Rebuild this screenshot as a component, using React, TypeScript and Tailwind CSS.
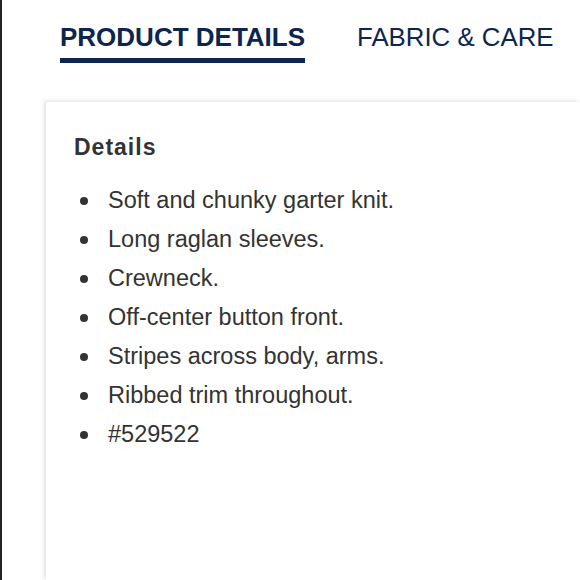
const items = [
  "Soft and chunky garter knit.",
  "Long raglan sleeves.",
  "Crewneck.",
  "Off-center button front.",
  "Stripes across body, arms.",
  "Ribbed trim throughout.",
  "#529522",
];

export default function App() {
  return (
    <div className="flex h-[580px] w-[580px] overflow-hidden bg-white font-['Liberation_Sans',Arial,sans-serif]">
      <div className="w-[2px] shrink-0 bg-[#222]" />
      <div className="flex min-w-0 flex-1 flex-col">
        <nav className="flex items-baseline gap-[52px] pl-[58px] pt-[24px] text-[#0d2650]">
          <div className="flex flex-col">
            <span className="whitespace-nowrap text-[26px] font-bold leading-none">
              PRODUCT DETAILS
            </span>
            <span className="mt-[8px] h-[5px] w-full bg-[#0d2650]" />
          </div>
          <span className="whitespace-nowrap text-[25.8px] leading-none">
            FABRIC &amp; CARE
          </span>
        </nav>
        <section className="ml-[44px] mt-[39px] flex-1 bg-white pl-[28px] pt-[34px] shadow-[-2px_-1px_4px_rgba(0,0,0,0.12)]">
          <h2 className="text-[23px] font-bold leading-none tracking-[1px] text-[#333]">
            Details
          </h2>
          <ul className="mt-[22px] text-[23.5px] leading-[39px] text-[#333]">
            {items.map((item) => (
              <li key={item} className="flex items-center whitespace-nowrap">
                <span className="ml-[6px] mr-[20px] h-[8px] w-[8px] rounded-full bg-[#333]" />
                {item}
              </li>
            ))}
          </ul>
        </section>
      </div>
    </div>
  );
}
